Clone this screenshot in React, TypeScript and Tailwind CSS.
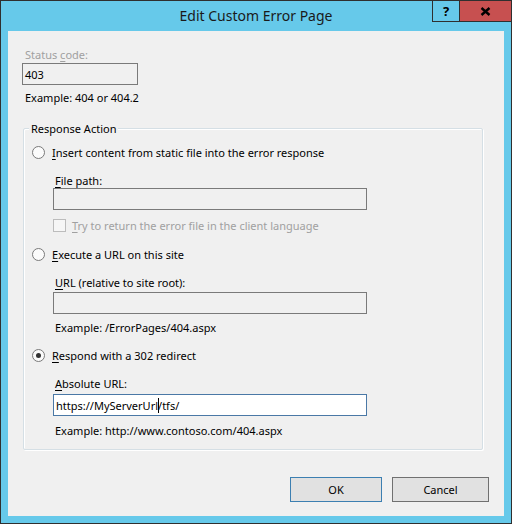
import React from "react";

function Radio({ checked }: { checked?: boolean }) {
  return (
    <span className="flex h-[13px] w-[13px] shrink-0 items-center justify-center rounded-full border border-[#7a7a7a] bg-[#fbfbfb]">
      {checked && <span className="h-[5px] w-[5px] rounded-full bg-[#333333]" />}
    </span>
  );
}

function Key({ children }: { children: React.ReactNode }) {
  return <span className="underline decoration-1 underline-offset-[2px]">{children}</span>;
}

export default function App() {
  return (
    <div
      className="relative flex h-[524px] w-[512px] flex-col border border-[#2f2f2f] bg-[#66c9ea] text-[11px] leading-[15px] text-black"
      style={{ fontFamily: '"Noto Sans", "Open Sans", sans-serif' }}
    >
      {/* Title bar */}
      <div className="flex h-[30px] shrink-0 items-center justify-center pb-[1px]">
        <span className="text-[14px] leading-[18px] text-[#1a1a1a]">Edit Custom Error Page</span>
      </div>

      {/* Caption buttons */}
      <div className="absolute right-0 top-0 flex h-[21px] border-b border-l border-[#2f2f2f]">
        <div className="flex w-[27px] items-center justify-center border-r border-[#2f2f2f] text-[13px] font-bold leading-none">
          ?
        </div>
        <div className="flex w-[51px] items-center justify-center bg-[#c75050]">
          <svg width="11" height="9" viewBox="0 0 11 9">
            <path d="M1.5 1 L9.5 8 M9.5 1 L1.5 8" stroke="#000" strokeWidth="2.4" />
          </svg>
        </div>
      </div>

      {/* Client area */}
      <div className="mx-[7px] mb-[7px] flex flex-1 flex-col bg-[#f0f0f0] pl-[14px] pr-[15px]">
        <div className="mt-[16px] pl-[3px] text-[#a0a0a0]">
          Status <Key>c</Key>ode:
        </div>
        <div className="mt-[1px] flex h-[22px] w-[116px] items-center border border-[#7a7a7a] px-[2px]">403</div>
        <div className="mt-[5px] pl-[3px]">Example: 404 or 404.2</div>

        {/* Response Action group */}
        <div className="relative ml-[1px] mt-[23px] w-[460px] rounded-[2px] border border-[#d5dfe5] pb-[11px] shadow-[1px_1px_0_#ffffff,inset_1px_1px_0_#ffffff]">
          <span className="absolute -top-[8px] left-[5px] bg-[#f0f0f0] px-[2px]">Response Action</span>

          <div className="mt-[16px] flex h-[15px] items-center gap-[7px] pl-[8px]">
            <Radio />
            <span>
              <Key>I</Key>nsert content from static file into the error response
            </span>
          </div>
          <div className="ml-[29px] mt-[13px] pl-[2px]">
            <Key>F</Key>ile path:
          </div>
          <div className="ml-[29px] h-[22px] w-[314px] border border-[#7a7a7a]" />
          <div className="ml-[29px] mt-[8px] flex h-[15px] items-center gap-[6px]">
            <span className="h-[13px] w-[13px] border border-[#bcbcbc] bg-[#f6f6f6]" />
            <span className="text-[#a0a0a0]">
              <Key>T</Key>ry to return the error file in the client language
            </span>
          </div>

          <div className="mt-[14px] flex h-[15px] items-center gap-[7px] pl-[8px]">
            <Radio />
            <span>
              <Key>E</Key>xecute a URL on this site
            </span>
          </div>
          <div className="ml-[29px] mt-[13px] pl-[2px]">
            <Key>U</Key>RL (relative to site root):
          </div>
          <div className="ml-[29px] mt-[2px] h-[22px] w-[314px] border border-[#7a7a7a]" />
          <div className="ml-[29px] mt-[6px] pl-[2px]">Example: /ErrorPages/404.aspx</div>

          <div className="mt-[13px] flex h-[15px] items-center gap-[7px] pl-[8px]">
            <Radio checked />
            <span>
              <Key>R</Key>espond with a 302 redirect
            </span>
          </div>
          <div className="ml-[29px] mt-[13px] pl-[2px]">
            <Key>A</Key>bsolute URL:
          </div>
          <div className="ml-[29px] mt-[3px] flex h-[22px] w-[314px] items-center border border-[#4a78a6] bg-white px-[2px]">
            <span>https://MyServerUrl</span>
            <span className="-mr-[1px] h-[15px] w-[1px] bg-black" />
            <span>/tfs/</span>
          </div>
          <div className="ml-[29px] mt-[7px] pl-[2px]">Example: http://www.contoso.com/404.aspx</div>
        </div>

        {/* Buttons */}
        <div className="mt-[27px] flex justify-end gap-[10px]">
          <button className="h-[25px] w-[92px] border border-[#3c7fb1] bg-[#e1e1e1]">OK</button>
          <button className="h-[25px] w-[97px] border border-[#707070] bg-[#e1e1e1]">Cancel</button>
        </div>
      </div>
    </div>
  );
}
